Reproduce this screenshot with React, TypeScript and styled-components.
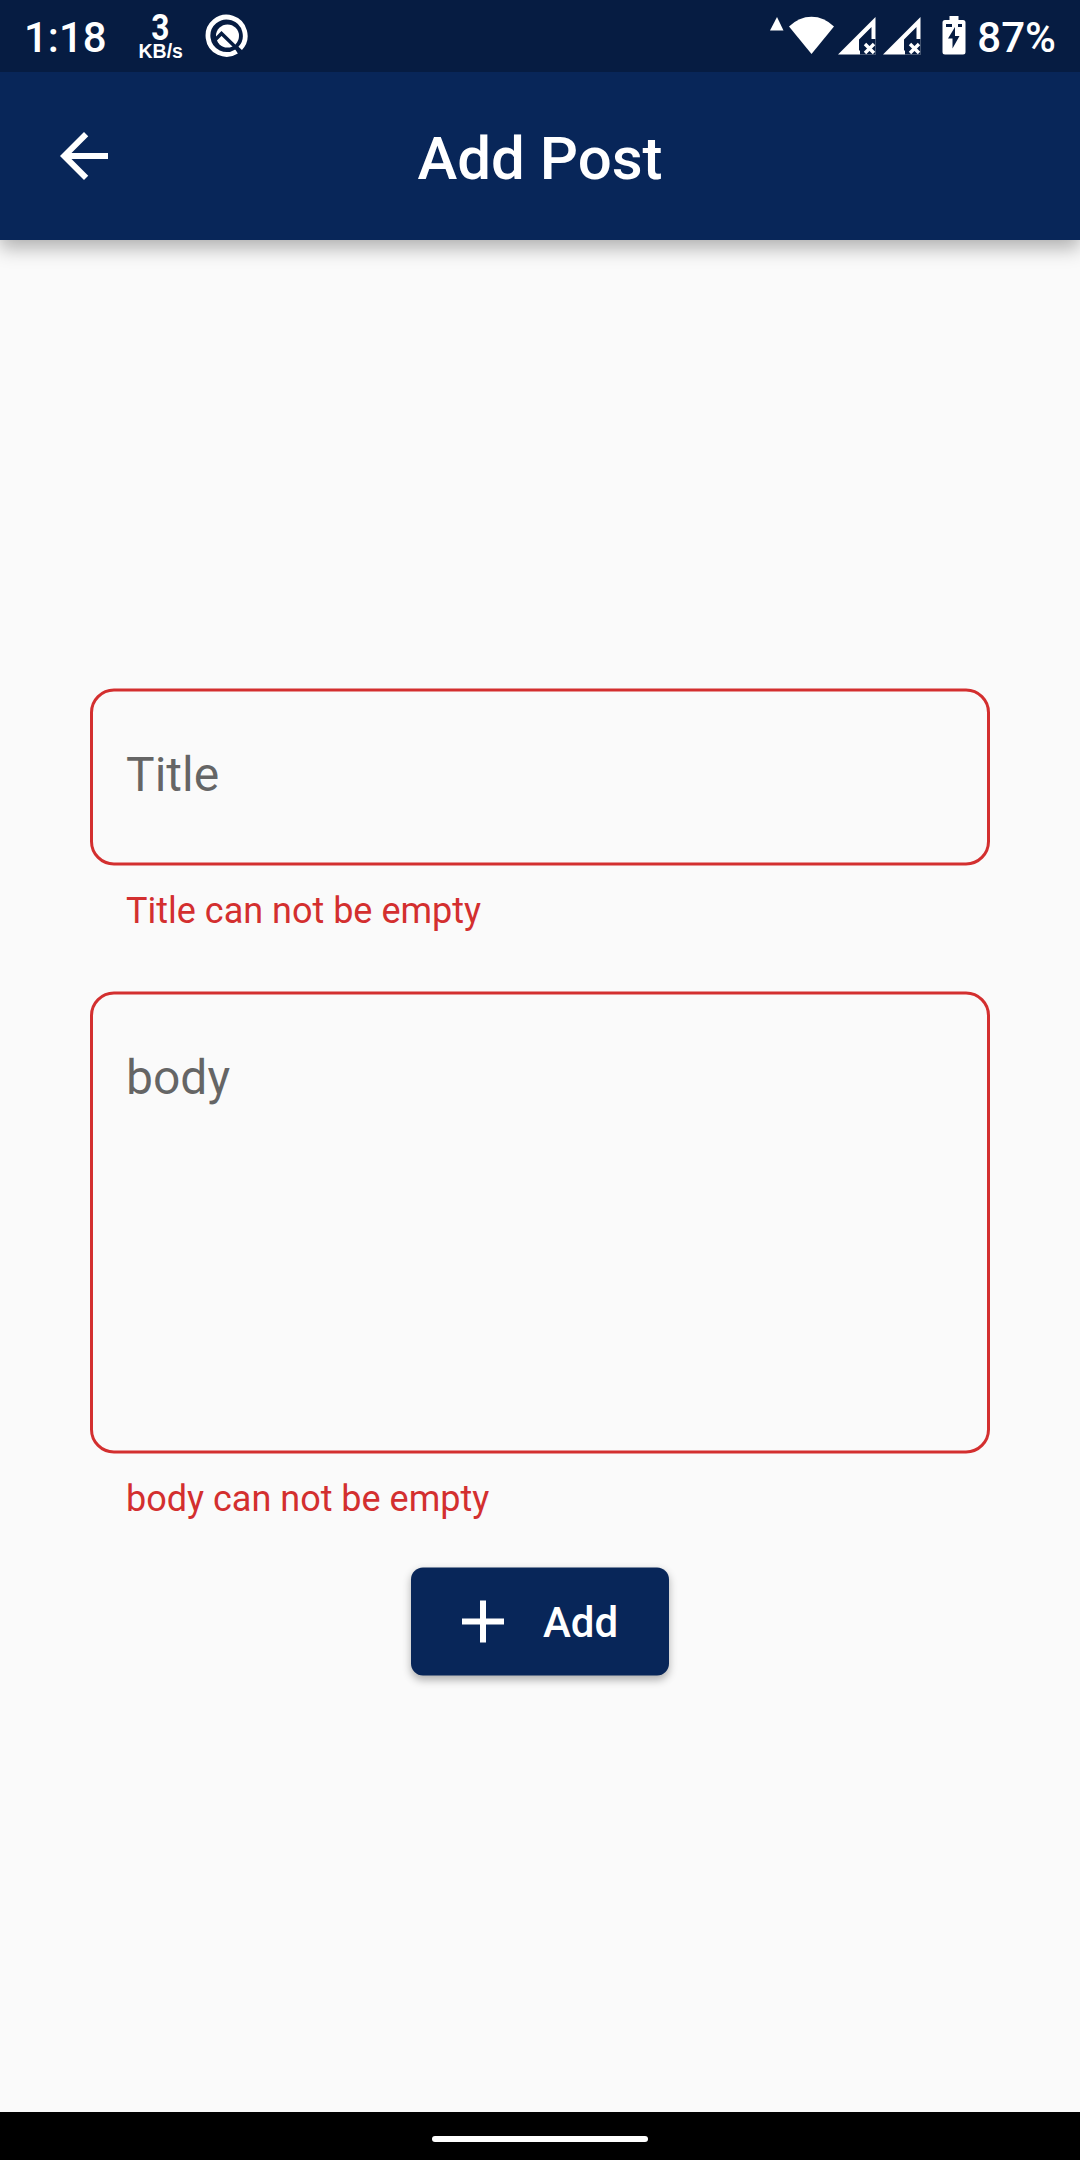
import React from 'react';
import styled, { createGlobalStyle } from 'styled-components';

const navy = '#082659';
const red = '#d32f2f';

const GlobalStyle = createGlobalStyle`
  *, *::before, *::after { box-sizing: border-box; }
  body { margin: 0; background: #fafafa; font-family: Roboto, "Noto Sans", sans-serif; }
`;

const Screen = styled.div`
  display: flex;
  flex-direction: column;
  width: 1080px;
  height: 2160px;
  background: #fafafa;
  overflow: hidden;
`;

const StatusBar = styled.header`
  position: relative;
  z-index: 1;
  display: flex;
  justify-content: space-between;
  flex: none;
  height: 72px;
  padding: 0 24px;
  background: #061c42;
  color: #fff;
`;

const StatusGroup = styled.div`
  display: flex;
  align-items: flex-start;
`;

const StatusText = styled.span<{ $left?: number }>`
  margin-left: ${(p) => p.$left ?? 0}px;
  padding-top: 13px;
  font-size: 42px;
  font-weight: 500;
  line-height: 50px;
`;

const NetSpeed = styled.div`
  display: flex;
  flex-direction: column;
  align-items: center;
  width: 46px;
  margin-left: 31px;
  padding-top: 11px;
`;

const SpeedValue = styled.span`
  font-size: 36px;
  font-weight: 700;
  line-height: 34px;
  transform: scaleX(0.88);
`;

const SpeedUnit = styled.span`
  margin-top: -3px;
  font-family: "Liberation Sans", Arial, sans-serif;
  font-size: 19.5px;
  font-weight: 700;
  line-height: 18px;
`;

const Glyph = styled.svg<{ $left?: number; $top?: number }>`
  display: block;
  flex: none;
  margin-left: ${(p) => p.$left ?? 0}px;
  margin-top: ${(p) => p.$top ?? 0}px;
`;

const AppBar = styled.div`
  display: grid;
  grid-template-columns: 168px 1fr 168px;
  align-items: center;
  flex: none;
  height: 168px;
  background: ${navy};
  color: #fff;
  box-shadow: 0 8px 18px rgba(0, 0, 0, 0.3);
`;

const IconButton = styled.button`
  display: flex;
  align-items: center;
  justify-content: center;
  width: 168px;
  height: 168px;
  padding: 0;
  border: 0;
  background: none;
  color: inherit;
`;

const Heading = styled.h1`
  margin: 0;
  padding-top: 6px;
  text-align: center;
  font-size: 60px;
  font-weight: 500;
  line-height: 70px;
`;

const Form = styled.form`
  display: flex;
  flex-direction: column;
  align-items: center;
  flex: 1;
  padding: 448px 90px 0;
`;

const Field = styled.label<{ $gap: number }>`
  display: block;
  width: 100%;
  margin-bottom: ${(p) => p.$gap}px;
`;

const Outline = styled.div<{ $height: number }>`
  height: ${(p) => p.$height}px;
  padding: 55px 33px 0;
  border: 3px solid ${red};
  border-radius: 24px;
  transform: translateY(0.5px);
`;

const Hint = styled.span`
  display: block;
  font-size: 48px;
  line-height: 56px;
  color: rgba(0, 0, 0, 0.6);
`;

const ErrorText = styled.span`
  display: block;
  padding: 25px 36px 0;
  font-size: 36px;
  line-height: 42px;
  color: ${red};
`;

const AddButton = styled.button`
  display: flex;
  align-items: center;
  gap: 24px;
  width: 258px;
  height: 108px;
  padding: 0 0 0 36px;
  border: 0;
  border-radius: 12px;
  background: ${navy};
  color: #fff;
  font: 500 42px/49px Roboto, "Noto Sans", sans-serif;
  transform: translateY(0.5px);
  box-shadow: 0 4px 9px rgba(0, 0, 0, 0.3);
`;

const NavBar = styled.footer`
  display: flex;
  justify-content: center;
  flex: none;
  height: 48px;
  padding-top: 24px;
  background: #000;
`;

const NavHandle = styled.div`
  width: 216px;
  height: 6px;
  border-radius: 3px;
  background: #fff;
`;

const SignalIcon = ({ left }: { left: number }) => (
  <Glyph $left={left} $top={17} width="38" height="38" viewBox="0 0 38 38">
    <path d="M0 37.5 37.5 0V22H33.5V10L21 22.5V33L22 34V37.5Z" fill="#fff" />
    <path d="M37.5 22V37.5H22" fill="none" stroke="#fff" strokeOpacity=".25" />
    <path d="M27 27 36 36M36 27 27 36" stroke="#fff" strokeWidth="3.4" />
  </Glyph>
);

export default function App() {
  return (
    <Screen>
      <GlobalStyle />
      <StatusBar>
        <StatusGroup>
          <StatusText>1:18</StatusText>
          <NetSpeed>
            <SpeedValue>3</SpeedValue>
            <SpeedUnit>KB/s</SpeedUnit>
          </NetSpeed>
          <Glyph $left={21} $top={14} width="44" height="44" viewBox="0 0 44 44">
            <path d="M31.6 37.4A18.6 18.6 0 1 1 35.2 34.4" fill="none" stroke="#fff" strokeWidth="4.8" />
            <circle cx="22.5" cy="22" r="11.5" fill="#fff" />
            <path d="M9 27 16.5 19.5 33 35.5" fill="none" stroke="#061c42" strokeWidth="3.4" />
          </Glyph>
        </StatusGroup>
        <StatusGroup>
          <Glyph $top={17} width="14" height="14" viewBox="0 0 14 14">
            <path d="M7 0 13.5 13.5H0Z" fill="#fff" />
          </Glyph>
          <Glyph $left={5} $top={16} width="46" height="38" viewBox="0 0 46 38">
            <path d="M0 10.5Q10 .7 22.5 .7T45 10.5L22.5 38Z" fill="#fff" />
          </Glyph>
          <SignalIcon left={3} />
          <SignalIcon left={7} />
          <Glyph $left={21} $top={16} width="24" height="39" viewBox="0 0 24 39">
            <path d="M7.5 0H16.5V4H21A2.5 2.5 0 0 1 23.5 6.5V36A2.5 2.5 0 0 1 21 38.5H3A2.5 2.5 0 0 1 .5 36V6.5A2.5 2.5 0 0 1 3 4H7.5Z" fill="#fff" />
            <path d="M4 8H10V11H4ZM16 8H20V11H16ZM13 11V20H17.5L10.5 32.5V22.5H6Z" fill="#061c42" />
          </Glyph>
          <StatusText $left={11}>87%</StatusText>
        </StatusGroup>
      </StatusBar>
      <AppBar>
        <IconButton type="button" aria-label="Back">
          <svg width="72" height="72" viewBox="0 0 24 24" fill="#fff">
            <path d="M20 11H7.83l5.59-5.59L12 4l-8 8 8 8 1.41-1.41L7.83 13H20v-2z" />
          </svg>
        </IconButton>
        <Heading>Add Post</Heading>
      </AppBar>
      <Form>
        <Field $gap={59}>
          <Outline $height={177}>
            <Hint>Title</Hint>
          </Outline>
          <ErrorText>Title can not be empty</ErrorText>
        </Field>
        <Field $gap={47}>
          <Outline $height={462}>
            <Hint>body</Hint>
          </Outline>
          <ErrorText>body can not be empty</ErrorText>
        </Field>
        <AddButton type="button">
          <svg width="72" height="72" viewBox="0 0 24 24" fill="#fff">
            <path d="M19 13h-6v6h-2v-6H5v-2h6V5h2v6h6v2z" />
          </svg>
          Add
        </AddButton>
      </Form>
      <NavBar>
        <NavHandle />
      </NavBar>
    </Screen>
  );
}
